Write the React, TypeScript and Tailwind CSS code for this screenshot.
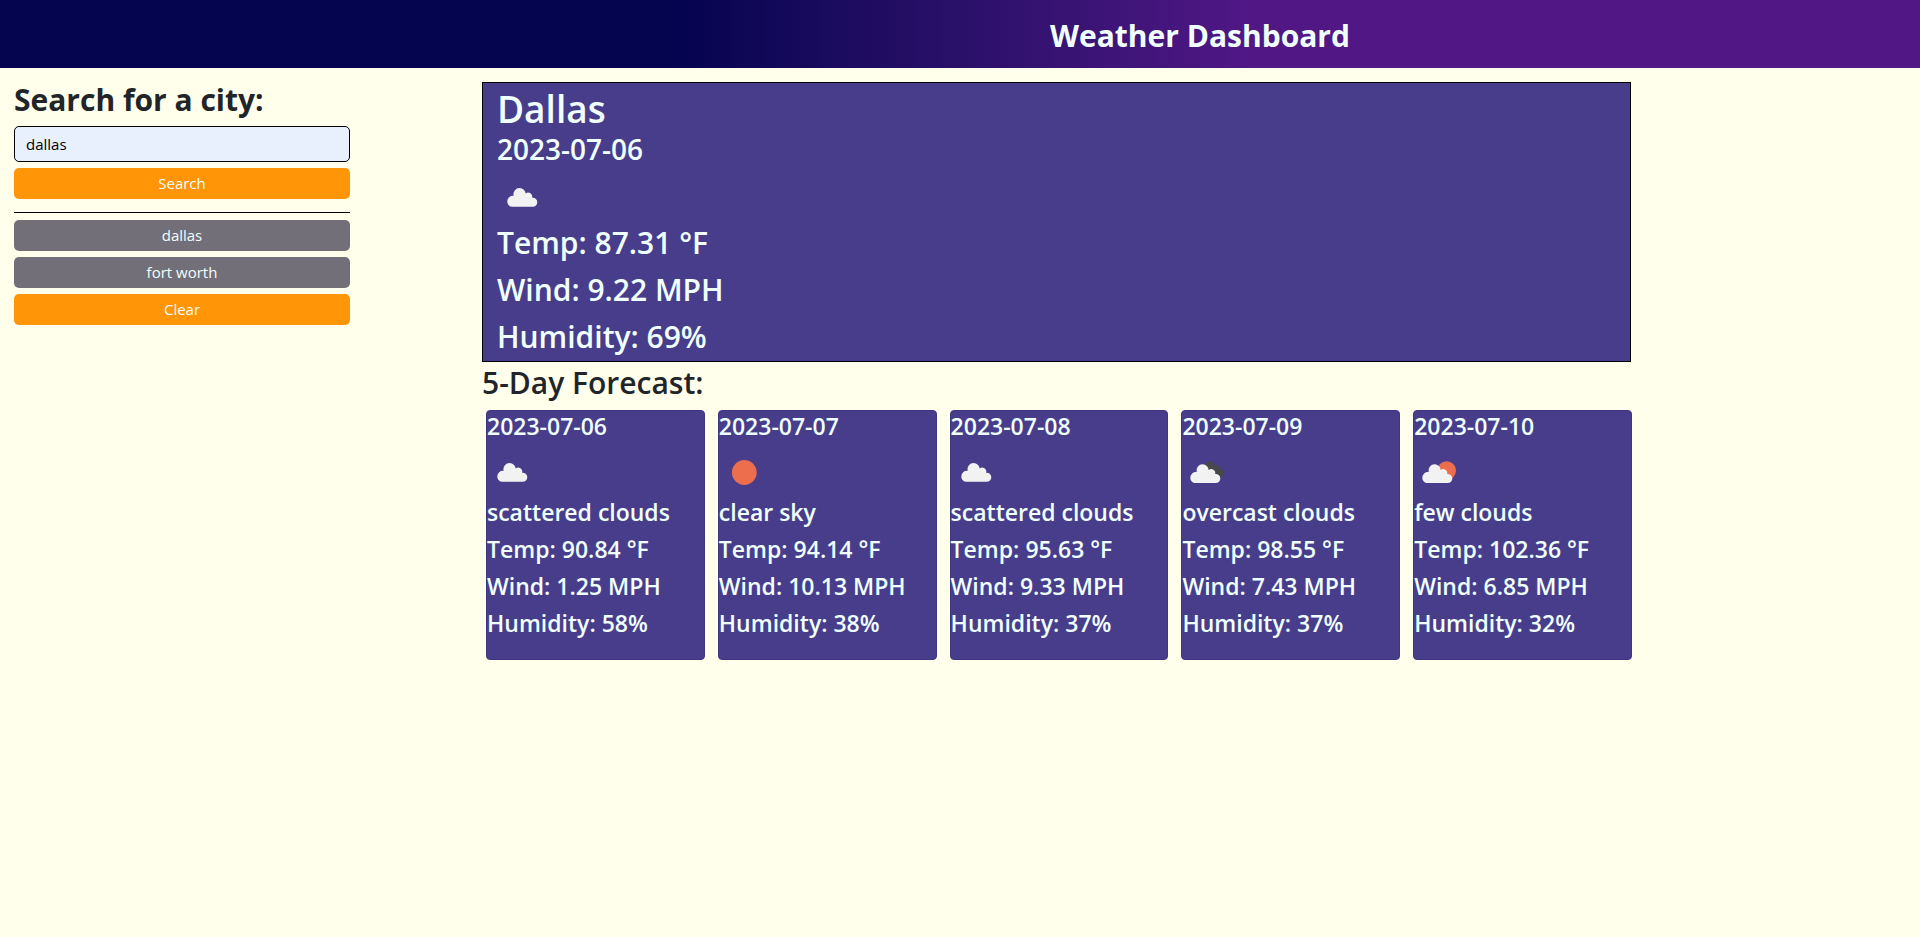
import { useState } from "react";

type IconKind = "cloud" | "sun" | "overcast" | "few";

interface Day {
  date: string;
  icon: IconKind;
  description: string;
  temp: string;
  wind: string;
  humidity: string;
}

const days: Day[] = [
  { date: "2023-07-06", icon: "cloud", description: "scattered clouds", temp: "90.84", wind: "1.25", humidity: "58" },
  { date: "2023-07-07", icon: "sun", description: "clear sky", temp: "94.14", wind: "10.13", humidity: "38" },
  { date: "2023-07-08", icon: "cloud", description: "scattered clouds", temp: "95.63", wind: "9.33", humidity: "37" },
  { date: "2023-07-09", icon: "overcast", description: "overcast clouds", temp: "98.55", wind: "7.43", humidity: "37" },
  { date: "2023-07-10", icon: "few", description: "few clouds", temp: "102.36", wind: "6.85", humidity: "32" },
];

const cloudPath =
  "M5 18.7 A5 5 0 0 1 0 13.5 A5.6 5.6 0 0 1 6.4 7.8 A6.1 6.1 0 0 1 12.4 0 A6.1 6.1 0 0 1 18.4 5.6 A4 4 0 0 1 24.8 9.8 A4.5 4.5 0 0 1 30 14.2 A4.5 4.5 0 0 1 25.5 18.7 Z";

function WeatherIcon({ kind }: { kind: IconKind }) {
  return (
    <svg viewBox="0 4 50 42" className="block h-[42px] w-[50px]" role="img" aria-label={kind}>
      {kind === "sun" && <circle cx="25.3" cy="24.5" r="12.4" fill="#ec6e4c" />}
      {kind === "cloud" && <path d={cloudPath} transform="translate(10.3 15)" fill="#f2f2f2" />}
      {kind === "few" && <circle cx="32.6" cy="22.6" r="9.4" fill="#ec6e4c" />}
      {kind === "overcast" && <path d={cloudPath} transform="translate(17.7 13.3) scale(0.82)" fill="#484848" />}
      {(kind === "few" || kind === "overcast") && (
        <path d={cloudPath} transform="translate(8.3 16.3)" fill="#f2f2f2" />
      )}
    </svg>
  );
}

function ForecastCard({ day }: { day: Day }) {
  return (
    <article className="flex h-[250px] flex-1 flex-col rounded border border-[#403680] bg-[#483d8b] pt-px text-[23px] leading-[29px] font-semibold text-[#f0ffff]">
      <h3>{day.date}</h3>
      <div className="pt-[11px] pb-1">
        <WeatherIcon kind={day.icon} />
      </div>
      <div className="flex flex-col gap-2">
        <p>{day.description}</p>
        <p>Temp: {day.temp} °F</p>
        <p>Wind: {day.wind} MPH</p>
        <p>Humidity: {day.humidity}%</p>
      </div>
    </article>
  );
}

export default function App() {
  const [city, setCity] = useState("dallas");
  const button = "h-[31px] w-full rounded-[5px] pb-px text-[15px] leading-6 text-[#f0ffff]";
  return (
    <div className="min-h-screen bg-[#ffffeb] font-['Open_Sans','Noto_Sans',sans-serif] text-[#212529]">
      <header className="flex h-[68px] items-center justify-end bg-linear-to-r from-[#04044f] from-35% to-[#501785] to-65%">
        <h1 className="w-3/4 pt-1 text-center text-[30px] leading-[38px] font-bold text-[#f0ffff]">Weather Dashboard</h1>
      </header>

      <div className="flex">
        <aside className="w-1/4 pt-[13px] pl-[14px]">
          <form className="w-[336px]" onSubmit={(e) => e.preventDefault()}>
            <label htmlFor="city" className="mb-[7px] block text-[30px] leading-[38px] font-bold">
              Search for a city:
            </label>
            <input
              id="city"
              value={city}
              onChange={(e) => setCity(e.target.value)}
              className="block h-9 w-full rounded-[5px] border border-black bg-[#e8f0fe] px-[11px] text-[15px] text-black outline-none"
            />
            <button type="submit" className={`${button} mt-[6px] bg-[#ff9507]`}>Search</button>
          </form>
          <hr className="mt-[13px] mb-[7px] h-px w-[336px] border-0 bg-black" />
          <div className="flex w-[336px] flex-col gap-[6px]">
            <button type="button" className={`${button} bg-[#736f78]`}>dallas</button>
            <button type="button" className={`${button} bg-[#736f78]`}>fort worth</button>
            <button type="button" className={`${button} bg-[#ff9507]`}>Clear</button>
          </div>
        </aside>

        <main className="w-3/5 pt-[14px] pl-[2px]">
          <section className="mr-px flex flex-col border border-black bg-[#483d8b] px-[14px] pt-[3px] pb-px font-semibold text-[#f0ffff]">
            <h2 className="text-[37px] leading-[46px]">Dallas</h2>
            <p className="text-[28px] leading-[34px]">2023-07-06</p>
            <div className="pt-[11px]">
              <WeatherIcon kind="cloud" />
            </div>
            <div className="flex flex-col text-[30px] leading-[47px]">
              <p>Temp: 87.31 °F</p>
              <p>Wind: 9.22 MPH</p>
              <p>Humidity: 69%</p>
            </div>
          </section>

          <h2 className="pt-[2px] mb-2 text-[30px] leading-[38px] font-semibold">5-Day Forecast:</h2>
          <div className="flex gap-[13px] pl-1">
            {days.map((day) => (
              <ForecastCard key={day.date} day={day} />
            ))}
          </div>
        </main>
      </div>
    </div>
  );
}
